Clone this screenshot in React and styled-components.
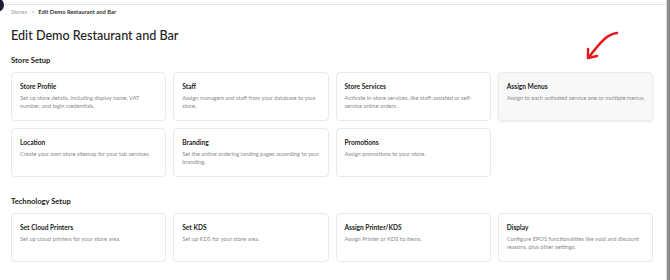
import React from "react";
import styled, { createGlobalStyle } from "styled-components";

const Global = createGlobalStyle`
  html, body { margin: 0; padding: 0; background: #fff; }
  body { font-family: Lato, "Noto Sans", sans-serif; color: #222; }
  * { box-sizing: border-box; }
`;

const Frame = styled.div`
  position: relative;
  display: flex;
  width: 670px;
  height: 280px;
  overflow: hidden;
  background: #fff;
`;

const Main = styled.div`
  flex: 1;
  display: flex;
  flex-direction: column;
`;

const Scrollbar = styled.div`
  width: 4px;
  border-left: 1px solid #dcdcdc;
  background: #8c8c8c;
`;

const TopBar = styled.div`
  height: 5px;
  border-bottom: 1px solid #e6e6e6;
`;

const Content = styled.div`
  padding: 0 13px 0 11px;
  display: flex;
  flex-direction: column;
`;

const Breadcrumb = styled.div`
  margin-top: 3px;
  font-size: 5.8px;
  line-height: 8px;
  display: flex;
  gap: 4px;
  color: #999;
`;

const Crumb = styled.span`
  color: ${(p) => (p.$current ? "#333" : "#9a9a9a")};
  font-weight: ${(p) => (p.$current ? 700 : 400)};
`;

const Title = styled.h1`
  margin: 12px 0 0;
  font-size: 12.6px;
  line-height: 16px;
  font-weight: 500;
  color: #222;
`;

const SectionTitle = styled.h2`
  margin: ${(p) => p.$top}px 0 0;
  font-size: 7.6px;
  line-height: 10px;
  font-weight: 700;
  color: #222;
`;

const Grid = styled.div`
  margin-top: 7px;
  display: grid;
  grid-template-columns: repeat(4, 1fr);
  grid-auto-rows: 49px;
  gap: 7px;
`;

const Card = styled.div`
  border: 1px solid ${(p) => (p.$active ? "#ececec" : "#e9e9e9")};
  border-radius: 4px;
  background: ${(p) => (p.$active ? "#f8f8f8" : "#fff")};
  box-shadow: ${(p) => (p.$active ? "0 1px 3px rgba(0,0,0,0.08)" : "none")};
  padding: 8px 5px 0 8px;
  display: flex;
  flex-direction: column;
`;

const CardTitle = styled.div`
  font-size: 6.6px;
  line-height: 10px;
  font-weight: 700;
  color: #222;
`;

const CardText = styled.div`
  margin-top: 3px;
  font-size: 5.7px;
  line-height: 8px;
  color: #8a8a8a;
`;

const Dot = styled.div`
  position: absolute;
  left: -10px;
  top: -2px;
  width: 14px;
  height: 14px;
  border-radius: 50%;
  background: #1d1b3a;
`;

const Arrow = styled.svg`
  position: absolute;
  left: 582px;
  top: 28px;
`;

const storeSetup = [
  { t: "Store Profile", d: "Set up store details, including display name, VAT number, and login credentials." },
  { t: "Staff", d: "Assign managers and staff from your database to your store." },
  { t: "Store Services", d: "Activate in-store services, like staff-assisted or self-service online orders." },
  { t: "Assign Menus", d: "Assign to each activated service one or multiple menus.", active: true },
  { t: "Location", d: "Create your own store sitemap for your tab services." },
  { t: "Branding", d: "Set the online ordering landing pages according to your branding." },
  { t: "Promotions", d: "Assign promotions to your store." },
];

const techSetup = [
  { t: "Set Cloud Printers", d: "Set up cloud printers for your store area." },
  { t: "Set KDS", d: "Set up KDS for your store area." },
  { t: "Assign Printer/KDS", d: "Assign Printer or KDS to items." },
  { t: "Display", d: "Configure EPOS functionalities like void and discount reasons, plus other settings." },
];

export default function App() {
  return (
    <>
      <Global />
      <Frame>
        <Main>
          <TopBar />
          <Content>
            <Breadcrumb>
              <Crumb>Stores</Crumb>
              <Crumb>&gt;</Crumb>
              <Crumb $current>Edit Demo Restaurant and Bar</Crumb>
            </Breadcrumb>
            <Title>Edit Demo Restaurant and Bar</Title>
            <SectionTitle $top={11}>Store Setup</SectionTitle>
            <Grid>
              {storeSetup.map((c) => (
                <Card key={c.t} $active={c.active}>
                  <CardTitle>{c.t}</CardTitle>
                  <CardText>{c.d}</CardText>
                </Card>
              ))}
            </Grid>
            <SectionTitle $top={19}>Technology Setup</SectionTitle>
            <Grid>
              {techSetup.map((c) => (
                <Card key={c.t}>
                  <CardTitle>{c.t}</CardTitle>
                  <CardText>{c.d}</CardText>
                </Card>
              ))}
            </Grid>
          </Content>
        </Main>
        <Scrollbar />
        <Dot />
        <Arrow width="40" height="36" viewBox="0 0 40 36">
          <path d="M35 5 C26 6 20 12 7 29" fill="none" stroke="#e3191c" strokeWidth="2.4" strokeLinecap="round" />
          <path d="M6 21 L6 30 L15 28" fill="none" stroke="#e3191c" strokeWidth="2.4" strokeLinecap="round" strokeLinejoin="round" />
        </Arrow>
      </Frame>
    </>
  );
}
